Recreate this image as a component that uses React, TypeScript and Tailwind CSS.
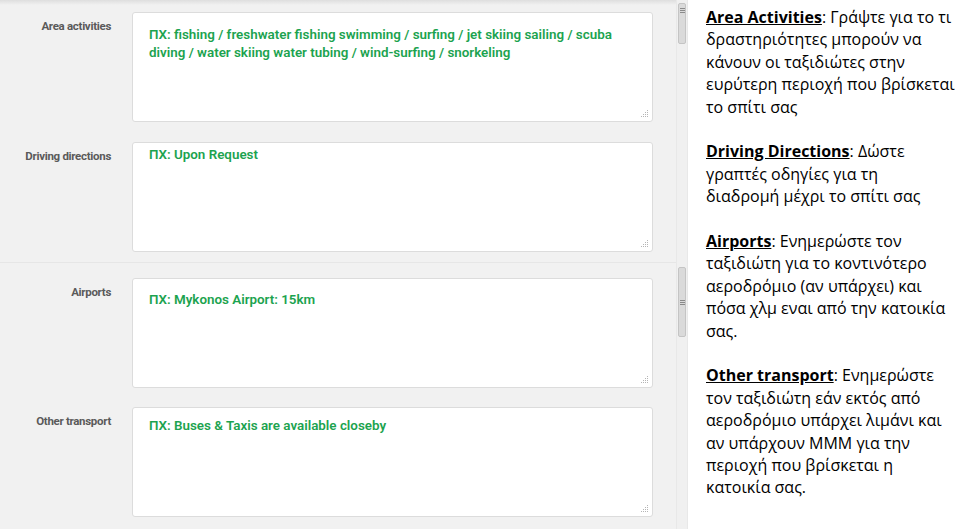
import React from 'react';

interface Field {
  label: string;
  lines: string[];
  rowClass: string;
  textPad: string;
}

const fields: Field[] = [
  {
    label: 'Area activities',
    lines: [
      'ΠΧ: fishing / freshwater fishing swimming / surfing / jet skiing sailing / scuba',
      'diving / water skiing water tubing / wind-surfing / snorkeling',
    ],
    rowClass: 'h-[132px] pt-[12px]',
    textPad: 'pt-[13px]',
  },
  {
    label: 'Driving directions',
    lines: ['ΠΧ: Upon Request'],
    rowClass: 'h-[130px] pt-[10px]',
    textPad: 'pt-[3px]',
  },
  {
    label: 'Airports',
    lines: ['ΠΧ: Mykonos Airport: 15km'],
    rowClass: 'h-[130px] pt-[15px] border-t border-[#e6e6e6]',
    textPad: 'pt-[12px]',
  },
  {
    label: 'Other transport',
    lines: ['ΠΧ: Buses & Taxis are available closeby'],
    rowClass: 'h-[137px] pt-[15px]',
    textPad: 'pt-[9px]',
  },
];

function Grip() {
  return (
    <svg className="absolute right-[3px] bottom-[3px]" width="9" height="9" viewBox="0 0 9 9">
      <g fill="#b5b5b5">
        <rect x="7" y="1" width="1" height="1" />
        <rect x="5" y="3" width="1" height="1" />
        <rect x="7" y="3" width="1" height="1" />
        <rect x="3" y="5" width="1" height="1" />
        <rect x="5" y="5" width="1" height="1" />
        <rect x="7" y="5" width="1" height="1" />
        <rect x="1" y="7" width="1" height="1" />
        <rect x="3" y="7" width="1" height="1" />
        <rect x="5" y="7" width="1" height="1" />
        <rect x="7" y="7" width="1" height="1" />
      </g>
    </svg>
  );
}

function FieldRow({ field }: { field: Field }) {
  return (
    <div className={`flex ${field.rowClass}`}>
      <div
        className="w-[111px] shrink-0 text-right text-[11.5px] font-bold text-[#5a5a5a] tracking-[-0.3px] pt-[6px]"
        style={{ fontFamily: '"Liberation Sans Narrow", "Roboto", sans-serif' }}
      >
        {field.label}
      </div>
      <div className={`ml-[21px] w-[521px] h-[110px] relative bg-white border border-[#dcdcdc] rounded-[3px] px-[16px] ${field.textPad}`}>
        <div
          className="text-[13.4px] leading-[18px] font-semibold text-[#1ca34f] whitespace-nowrap"
          style={{ fontFamily: '"Roboto", "Open Sans", sans-serif' }}
        >
          {field.lines.map((l, i) => (
            <div key={i}>{l}</div>
          ))}
        </div>
        <Grip />
      </div>
    </div>
  );
}

function Thumb({ top, height, center }: { top: string; height: string; center: boolean }) {
  return (
    <div
      className={`absolute left-[1px] right-[1px] ${top} ${height} bg-[#dadada] border border-[#c4c4c4] rounded-[2px] flex justify-center ${center ? 'items-center' : 'items-start pt-[4px]'}`}
    >
      <div className="w-[5px] flex flex-col gap-[1px]">
        <div className="h-px bg-[#8a8a8a]" />
        <div className="h-px bg-[#8a8a8a]" />
        <div className="h-px bg-[#8a8a8a]" />
      </div>
    </div>
  );
}

function Scrollbar() {
  return (
    <div className="w-[12px] shrink-0 h-full bg-[#f0f0f0] border-l border-r border-[#e8e8e8] relative">
      <Thumb top="top-[3px]" height="h-[41px]" center={false} />
      <Thumb top="top-[267px]" height="h-[70px]" center={true} />
    </div>
  );
}

const notes = [
  {
    title: 'Area Activities',
    lines: ['Γράψτε για το τι', 'δραστηριότητες μπορούν να', 'κάνουν οι ταξιδιώτες στην', 'ευρύτερη περιοχή που βρίσκεται', 'το σπίτι σας'],
  },
  {
    title: 'Driving Directions',
    lines: ['Δώστε', 'γραπτές οδηγίες για τη', 'διαδρομή μέχρι το σπίτι σας'],
  },
  {
    title: 'Airports',
    lines: ['Ενημερώστε τον', 'ταξιδιώτη για το κοντινότερο', 'αεροδρόμιο (αν υπάρχει) και', 'πόσα χλμ εναι από την κατοικία', 'σας.'],
  },
  {
    title: 'Other transport',
    lines: ['Ενημερώστε', 'τον ταξιδιώτη εάν εκτός από', 'αεροδρόμιο υπάρχει λιμάνι και', 'αν υπάρχουν ΜΜΜ για την', 'περιοχή που βρίσκεται η', 'κατοικία σας.'],
  },
];

export default function App() {
  return (
    <div className="w-[960px] h-[529px] flex overflow-hidden bg-white">
      <div className="w-[676px] shrink-0 h-full bg-[#f1f1f1] relative">
        <div className="absolute inset-x-0 top-0 h-[5px] bg-gradient-to-b from-[#dedede] to-[#f1f1f1]" />
        {fields.map((f) => (
          <FieldRow key={f.label} field={f} />
        ))}
      </div>
      <Scrollbar />
      <div
        className="flex-1 pl-[18px] pt-[6px] text-[16px] leading-[22.4px] text-black whitespace-nowrap flex flex-col gap-[22.4px]"
        style={{ fontFamily: '"Open Sans", "Noto Sans", sans-serif' }}
      >
        {notes.map((n) => (
          <div key={n.title}>
            {n.lines.map((l, i) => (
              <div key={i}>
                {i === 0 && (
                  <>
                    <span className="font-bold underline">{n.title}</span>
                    {': '}
                  </>
                )}
                {l}
              </div>
            ))}
          </div>
        ))}
      </div>
    </div>
  );
}
